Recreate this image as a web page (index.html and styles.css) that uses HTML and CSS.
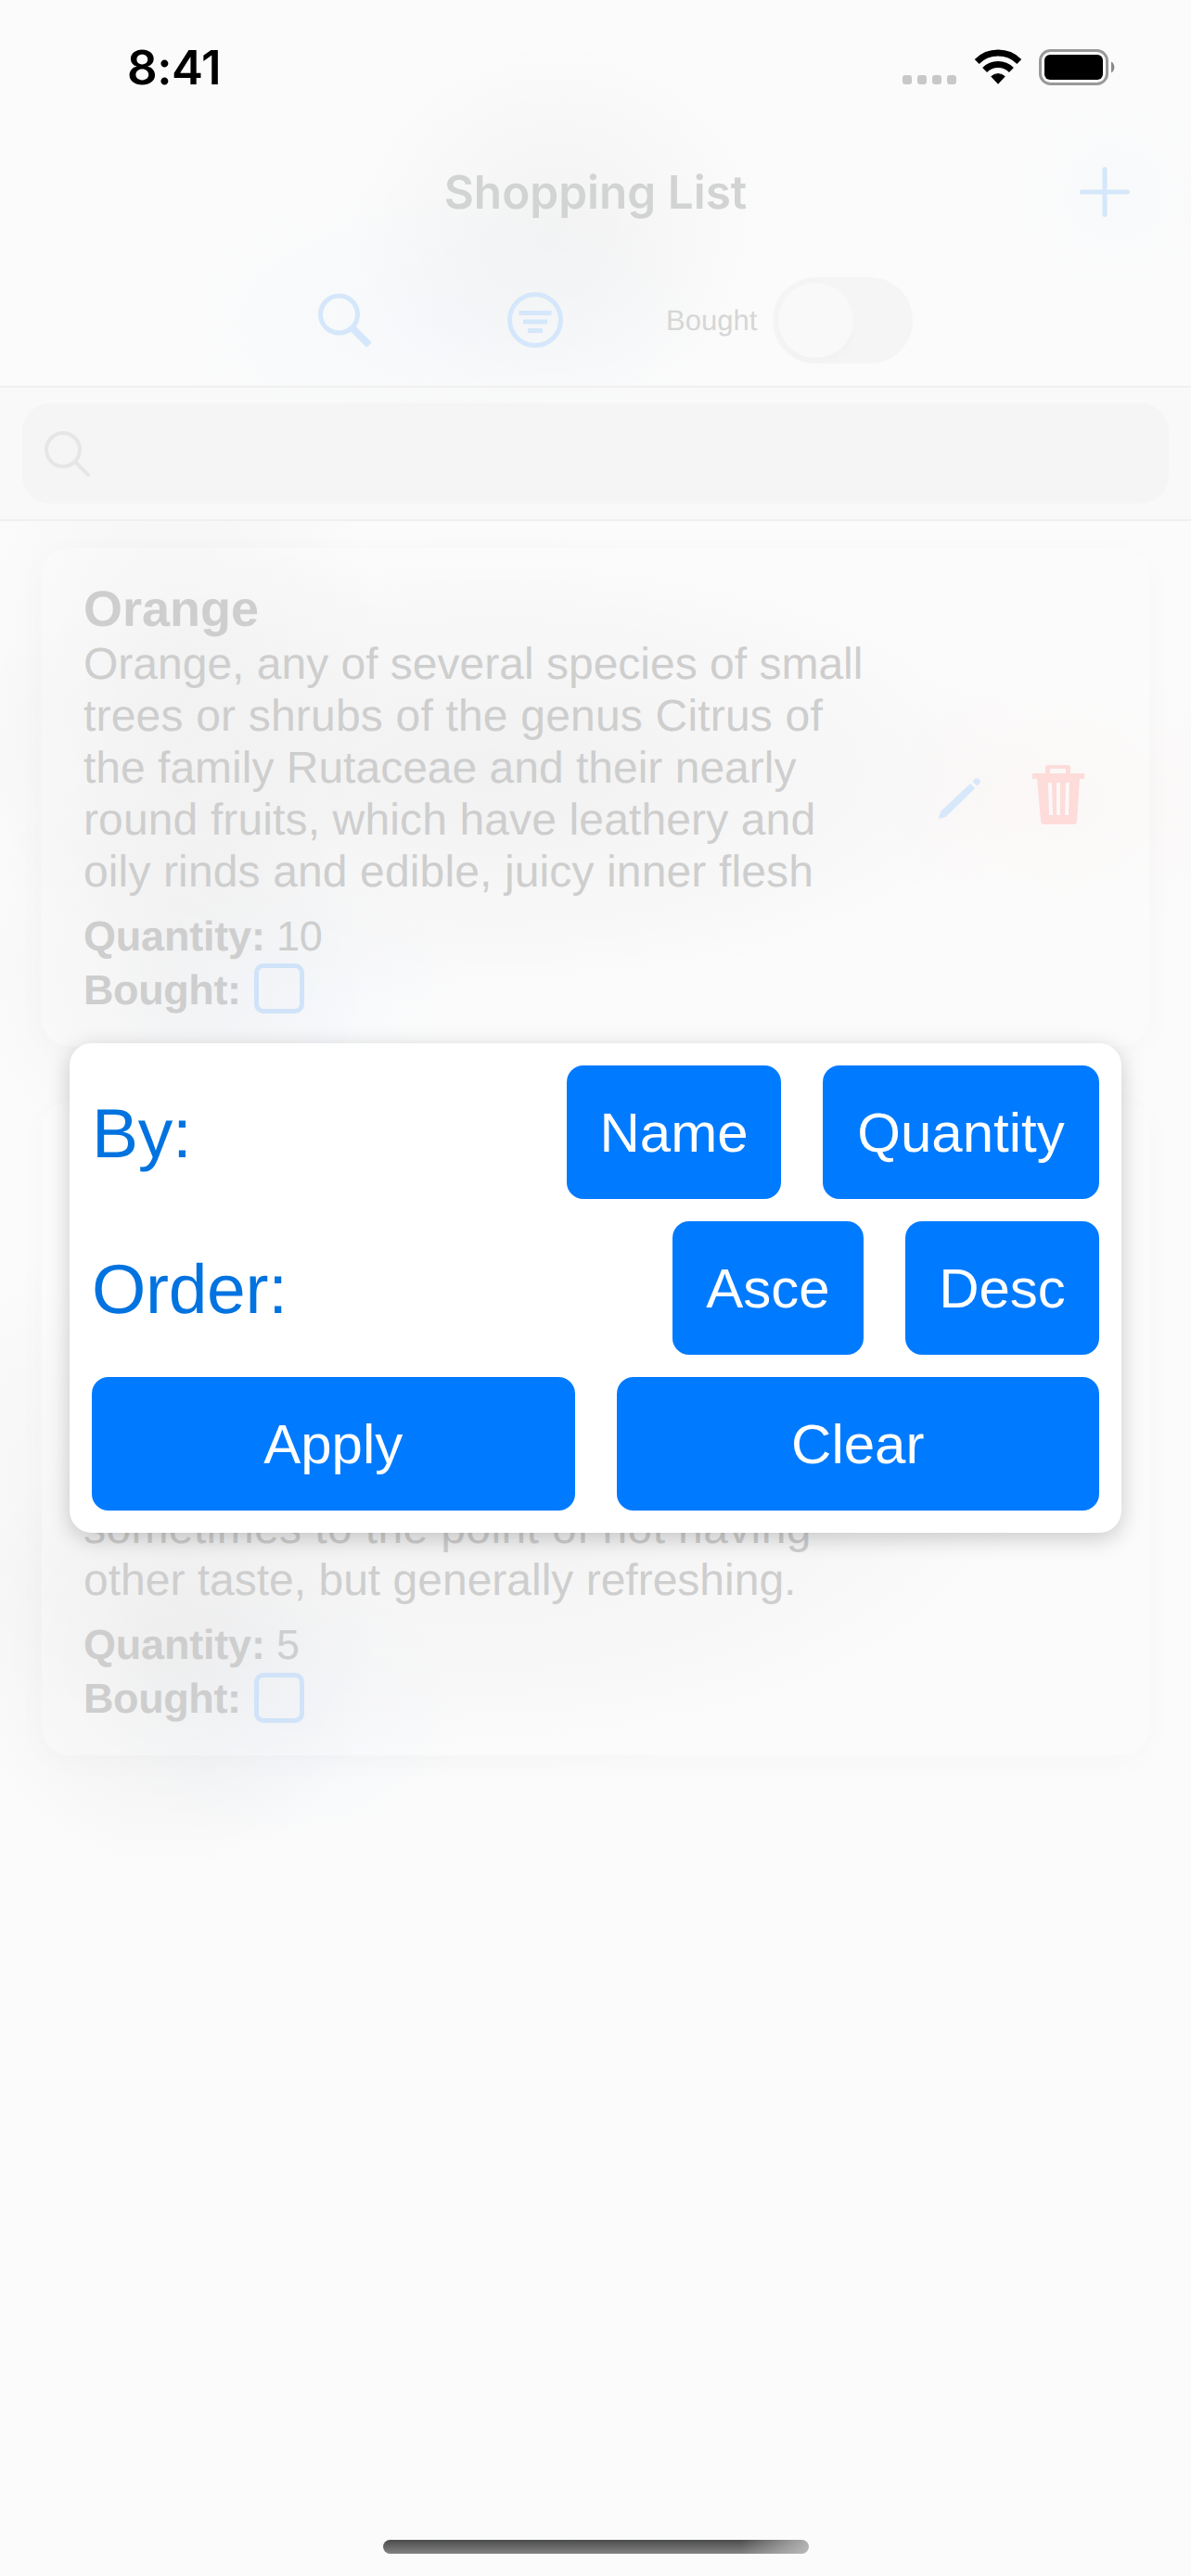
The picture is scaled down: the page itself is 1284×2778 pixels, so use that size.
FILE: index.html
```html
<!DOCTYPE html>
<html lang="en">
<head>
<meta charset="utf-8">
<title>Shopping List</title>
<link rel="stylesheet" href="styles.css">
</head>
<body>
<div class="screen">
  <div class="status">
    <span class="time">8:41</span>
    <div class="status-icons">
      <span class="dots"><i></i><i></i><i></i><i></i></span>
      <svg class="wifi" width="52" height="38" viewBox="0 0 52 38"><g fill="none" stroke="#000" stroke-width="7"><path d="M3.2 13.4A32.5 32.5 0 0 1 48.8 13.4"/><path d="M11.6 22.4A20.5 20.5 0 0 1 40.4 22.4"/></g><path d="M18.8 29.4A10.8 10.8 0 0 1 33.2 29.4L26 37.3Z" stroke="#000" stroke-linejoin="round"/></svg>
      <svg class="battery" width="83" height="39" viewBox="0 0 83 39"><rect x="1.5" y="1.5" width="72" height="36" rx="11" fill="none" stroke="#999" stroke-width="3"/><rect x="6" y="6" width="63" height="27" rx="6"/><path d="M78 13.5a7 7 0 0 1 0 12z" fill="#888"/></svg>
    </div>
  </div>

  <header class="nav">
    <span></span>
    <h1>Shopping List</h1>
    <svg class="plus" width="54" height="54" viewBox="0 0 54 54"><path d="M27 2.500v49M2.500 27h49"/></svg>
  </header>

  <div class="tools">
    <svg class="tool find" width="60" height="60" viewBox="0 0 60 60"><circle cx="23.5" cy="24" r="20"/><path class="thick" d="M38 39L56 57"/></svg>
    <svg class="tool sort" width="60" height="60" viewBox="0 0 60 60"><circle cx="30" cy="30" r="27.5"/><path d="M12.5 22.5h35M17 32h26M22 41.5h16"/></svg>
    <span class="tool-label">Bought</span>
    <span class="switch"><i></i></span>
  </div>

  <div class="search">
    <div class="field"><svg width="50" height="50" viewBox="0 0 50 50"><circle cx="20" cy="20" r="18"/><path d="M33 33L47 47"/></svg></div>
  </div>

  <main class="list">
    <article class="card">
      <div class="info">
        <h2>Orange</h2>
        <p>Orange, any of several species of small<br><span class="loose">trees or shrubs of the genus Citrus of</span><br>the family Rutaceae and their nearly<br><span class="open">round fruits, which have leathery and</span><br><span class="open">oily rinds and edible, juicy inner flesh</span></p>
        <div class="qty"><b>Quantity:</b> 10</div>
        <div class="got"><b>Bought:</b><i class="box"></i></div>
      </div>
      <svg class="pen" width="48" height="48" viewBox="0 0 50 50"><path d="M1 49l2-8L36.500 9.500l5.500 5L9 47zM39 7l3-3q2-1.500 4.500 0.500q2.500 2.500 0.500 4.500l-3 3z"/></svg>
      <svg class="bin" width="58" height="66" viewBox="0 0 58 66"><path fill-rule="evenodd" d="M1 10h14V4q0-3 3-3h21q3 0 3 3v6h15v6h-5l-3 45q0 4-4 4H14q-4 0-4-4L6 16H1zM20 10h17V5H20zM18 20l1 35h4l-1-35zM27 20v35h4V20zM37 20l-1 35h4l1-35z"/></svg>
    </article>
    <article class="card tall">
      <div class="info">
        <p><span class="loosest">sometimes to the point of not having</span><br>other taste, but generally refreshing.</p>
        <div class="qty"><b>Quantity:</b> 5</div>
        <div class="got"><b>Bought:</b><i class="box"></i></div>
      </div>
    </article>
  </main>

  <section class="dialog">
    <div class="row"><span class="label">By:</span><button class="name">Name</button><button class="quantity">Quantity</button></div>
    <div class="row"><span class="label">Order:</span><button class="asce">Asce</button><button>Desc</button></div>
    <div class="row wide"><button>Apply</button><button>Clear</button></div>
  </section>
  <div class="home"></div>
</div>
</body>
</html>
```
FILE: styles.css
```css
* { box-sizing: border-box; }
body { margin: 0; }
h1, h2, p { margin: 0; }
i { display: block; }

.screen {
  position: relative;
  width: 1284px;
  height: 2778px;
  overflow: hidden;
  background:
    radial-gradient(230px 200px at 600px 240px, rgba(0,0,0,.03), transparent),
    radial-gradient(330px 170px at 480px 350px, rgba(40,130,255,.025), transparent),
    radial-gradient(150px 150px at 1200px 210px, rgba(40,130,255,.012), transparent),
    #fbfbfb;
  font-family: "Liberation Sans", Arial, sans-serif;
  font-kerning: none;
  text-rendering: geometricPrecision;
  color: #cecece;
}

/* status bar */
.status {
  display: flex;
  justify-content: space-between;
  height: 141px;
  padding: 54px 81px 0 137px;
  color: #000;
}
.time { font: 600 51px/39px Inter, sans-serif; letter-spacing: -0.4px; }
.status-icons { display: flex; align-items: flex-start; margin-top: -1px; }
.dots { display: flex; gap: 6px; margin: 28px 19px 0 0; }
.dots i { width: 10px; height: 10px; border-radius: 3px; background: #c8c8c8; }
.wifi { margin-right: 18px; }

/* navigation bar */
.nav {
  display: grid;
  grid-template-columns: 1fr auto 1fr;
  align-items: center;
  height: 132px;
  padding: 0 66px;
}
.nav h1 { font: 600 49.5px/60px Inter, sans-serif; color: #d2d3d3; }
.plus { justify-self: end; fill: none; stroke: #d5e7fa; stroke-width: 5; stroke-linecap: round; }

.tools {
  display: flex;
  align-items: center;
  height: 145px;
  padding: 1px 300px 0 342px;
  border-bottom: 2px solid #f0f0f0;
}
.tool { fill: none; stroke: #d5e7fa; stroke-width: 5; }
.thick { stroke-width: 8; }
.sort { margin-left: 145px; }
.tool-label { margin: 2px 0 0 111px; font-size: 31px; color: #d6d6d6; }
.switch { width: 151px; height: 93px; margin-left: auto; padding: 6px; border-radius: 47px; background: #f5f5f5; }
.switch i { width: 81px; height: 81px; border-radius: 50%; background: #f9f9f9; box-shadow: 0 6px 12px rgba(0,0,0,.015); }

/* search bar */
.search { height: 144px; padding: 17px 24px; border-bottom: 2px solid #f0f0f0; background: rgba(248,248,248,.7); }
.field { height: 108px; padding: 30px 24px; border-radius: 30px; background: #f5f5f5; }
.field svg { fill: none; stroke: #e6e6e6; stroke-width: 4; stroke-linecap: round; }

/* item cards */
.list {
  display: flex;
  flex-direction: column;
  gap: 60px;
  padding: 29px 45px 260px;
  background:
    radial-gradient(210px 170px at 1142px 300px, rgba(255,80,40,.025), transparent),
    radial-gradient(200px 150px at 310px 512px, rgba(60,130,255,.035), transparent),
    radial-gradient(200px 150px at 310px 1285px, rgba(60,130,255,.035), transparent),
    radial-gradient(230px 330px at 190px 160px, rgba(0,0,0,.03), transparent),
    radial-gradient(620px 260px at 530px 270px, rgba(0,0,0,.05), transparent),
    radial-gradient(220px 230px at 180px 480px, rgba(0,0,0,.04), transparent),
    radial-gradient(680px 330px at 500px 1030px, rgba(0,0,0,.05), transparent),
    radial-gradient(230px 240px at 180px 1220px, rgba(0,0,0,.05), transparent);
}
.card {
  display: flex;
  align-items: center;
  height: 537px;
  padding: 36px 45px;
  border-radius: 30px;
  background: rgba(255,255,255,.2);
  box-shadow: 0 6px 36px rgba(0,0,0,.025);
}
.card.tall { height: 705px; align-items: flex-end; padding-bottom: 34px; }
.info { width: 921px; }
.info h2 { font-size: 54px; line-height: 64px; }
.info p { font-size: 48px; line-height: 56px; white-space: nowrap; }
.open { letter-spacing: .13px; }
.loose { letter-spacing: .19px; }
.loosest { letter-spacing: .38px; }
.qty { margin-top: 13px; font-size: 45px; line-height: 56px; letter-spacing: -.2px; }
.got { display: flex; align-items: center; font-size: 45px; line-height: 54px; }
.got b { margin-top: 3px; letter-spacing: -.4px; }
.box { width: 54px; height: 54px; margin-left: 14px; border: 5px solid #d0e3f8; border-radius: 10px; }
.pen { fill: #d8e8fb; }
.bin { margin: 0 0 5px 53px; fill: #fddcda; }

/* sort dialog, over the list */
.dialog {
  position: absolute;
  left: 75px;
  top: 1125px;
  width: 1134px;
  height: 528px;
  padding: 24px;
  display: flex;
  flex-direction: column;
  gap: 24px;
  border-radius: 24px;
  background: #fff;
  box-shadow: 0 6px 24px rgba(0,0,0,.2);
}
.row { display: flex; align-items: center; gap: 45px; height: 144px; }
.label { flex: 1; margin-top: 1px; font-size: 75px; letter-spacing: -.3px; color: #0073e0; }
.dialog button {
  height: 144px;
  padding: 1px 0 0;
  width: 209px;
  border: 0;
  border-radius: 18px;
  background: #007aff;
  color: #fff;
  font: 60px "Liberation Sans", Arial, sans-serif;
  font-kerning: none;
}
.dialog .name { width: 231px; }
.dialog .quantity { width: 298px; }
.dialog .asce { width: 206px; }
.wide button { flex: 1; }

.home {
  position: absolute;
  left: 413px;
  top: 2739px;
  width: 459px;
  height: 15px;
  border-radius: 8px;
  background: linear-gradient(90deg, transparent 84%, rgba(200,200,200,.8)), linear-gradient(#4a4c4b, #828282);
}
```
